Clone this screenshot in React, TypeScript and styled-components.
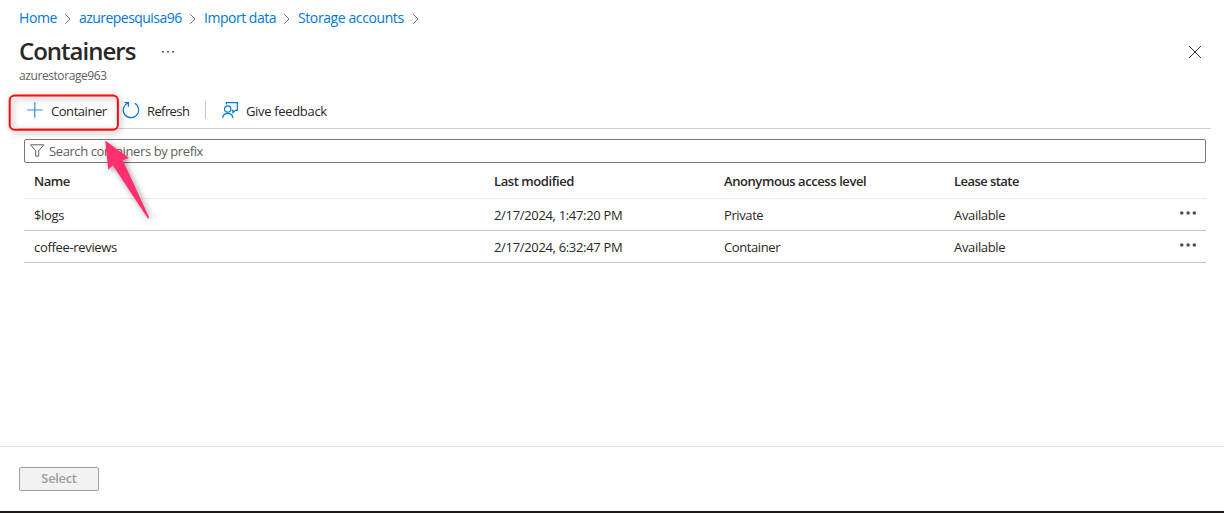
import React from "react";
import styled, { createGlobalStyle } from "styled-components";

const GlobalStyle = createGlobalStyle`
  * { box-sizing: border-box; }
  body {
    margin: 0;
    background: #fff;
    color: #292827;
    font-family: "Open Sans", "Noto Sans", sans-serif;
    font-size: 13px;
    overflow: hidden;
  }
`;

const Page = styled.div`
  position: relative;
  display: flex;
  flex-direction: column;
  height: 513px;
  border-bottom: 2px solid #1b1a19;
`;

const Label = styled.span<{ $track?: number }>`
  letter-spacing: ${(p) => p.$track ?? -0.33}px;
  white-space: nowrap;
`;

const Breadcrumb = styled.nav`
  display: flex;
  align-items: center;
  height: 36px;
  padding-left: 19px;
`;

const Crumb = styled.div<{ $width: number }>`
  display: flex;
  align-items: center;
  justify-content: space-between;
  width: ${(p) => p.$width}px;
  margin-right: 8px;
  color: #0078d4;
  font-size: 14px;

  ${Label} {
    padding-bottom: 1px;
  }
`;

const ChevronIcon = styled.svg`
  margin-top: 2px;
`;

const Header = styled.header`
  display: flex;
  justify-content: space-between;
  height: 56px;
  padding: 0 22px 0 19px;
`;

const TitleRow = styled.div`
  display: flex;
  align-items: center;
  height: 32px;
  gap: 26px;
`;

const Title = styled.h1`
  width: 117px;
  margin: 0;
  padding-bottom: 2px;
  font-size: 24px;
  font-weight: 600;
  line-height: 32px;
  letter-spacing: -1px;
  white-space: nowrap;
`;

const Subtitle = styled.div`
  color: #605e5c;
  font-size: 12px;
  line-height: 16px;
`;

const CloseIcon = styled.svg`
  margin-top: 9px;
`;

const Toolbar = styled.div`
  display: flex;
  align-items: center;
  height: 37px;
  margin: 0 13px 0 19px;
  border-bottom: 1px solid #d2d0ce;
`;

const Command = styled.div<{ $width: number; $gap: number }>`
  display: flex;
  align-items: center;
  width: ${(p) => p.$width}px;
  gap: ${(p) => p.$gap}px;

  ${Label} {
    padding-top: 2px;
  }
`;

const Divider = styled.div`
  width: 1px;
  height: 18px;
  margin-right: 16px;
  background: #c8c6c4;
`;

const Content = styled.main`
  flex: 1;
  padding: 10px 18px 0 24px;
`;

const Search = styled.div`
  display: flex;
  align-items: center;
  height: 24px;
  gap: 4px;
  padding-left: 5px;
  border: 1px solid #7a7876;
  border-radius: 2px;
  color: #605e5c;
`;

const Row = styled.div<{ $head?: boolean }>`
  display: grid;
  grid-template-columns: 460px 230px 230px 1fr 28px;
  align-items: center;
  height: ${(p) => (p.$head ? 36 : 32)}px;
  padding-left: 10px;
  padding-top: ${(p) => (p.$head ? 1 : 0)}px;
  border-bottom: 1px solid ${(p) => (p.$head ? "#edebe9" : "#c8c6c4")};
  font-weight: ${(p) => (p.$head ? 600 : 400)};
`;

const RowMenu = styled.svg`
  margin-top: -3px;
`;

const Footer = styled.footer`
  height: 65px;
  padding: 20px 19px;
  border-top: 1px solid #e1dfdd;
`;

const SelectButton = styled.button`
  display: flex;
  align-items: center;
  justify-content: center;
  width: 80px;
  height: 24px;
  padding: 0 0 2px;
  border: 1px solid #a19f9d;
  border-radius: 2px;
  background: #f3f2f1;
  color: #a19f9d;
  font: 600 13px "Open Sans", sans-serif;
`;

const Annotation = styled.svg`
  position: absolute;
  left: 0;
  top: 85px;
  pointer-events: none;
`;

const Chevron = () => (
  <ChevronIcon width="8" height="12" viewBox="0 0 8 12" fill="none" stroke="#767472">
    <path d="M2.2 1.2 7 6 2.2 10.8" />
  </ChevronIcon>
);

const Dots = () => (
  <RowMenu width="18" height="6" viewBox="0 0 18 6" fill="#54524f">
    <circle cx="3.8" cy="3" r="1.8" />
    <circle cx="10.1" cy="3" r="1.8" />
    <circle cx="16.3" cy="3" r="1.8" />
  </RowMenu>
);

const crumbs = [
  { text: "Home", width: 52, track: -0.4 },
  { text: "azurepesquisa96", width: 117, track: -0.54 },
  { text: "Import data", width: 86, track: -0.48 },
  { text: "Storage accounts", width: 121, track: -0.4 },
];

const rows = [
  { name: "$logs", modified: "2/17/2024, 1:47:20 PM", access: "Private", lease: "Available" },
  { name: "coffee-reviews", modified: "2/17/2024, 6:32:47 PM", access: "Container", lease: "Available" },
];

export default function App() {
  return (
    <Page>
      <GlobalStyle />
      <Breadcrumb>
        {crumbs.map((c) => (
          <Crumb key={c.text} $width={c.width}>
            <Label $track={c.track}>{c.text}</Label>
            <Chevron />
          </Crumb>
        ))}
      </Breadcrumb>
      <Header>
        <div>
          <TitleRow>
            <Title>Containers</Title>
            <svg width="12" height="2" fill="#605e5c">
              <path d="M0 0h2v1.5H0zM5 0h2v1.5H5zM10 0h2v1.5h-2z" />
            </svg>
          </TitleRow>
          <Subtitle>
            <Label $track={-0.42}>azurestorage963</Label>
          </Subtitle>
        </div>
        <CloseIcon width="14" height="14" viewBox="0 0 14 14" stroke="#323130">
          <path d="M1 1l12 12M13 1 1 13" />
        </CloseIcon>
      </Header>
      <Toolbar>
        <Command $width={103} $gap={8}>
          <svg width="24" height="18" viewBox="0 0 24 18" stroke="#2b8edb" strokeWidth="1.2">
            <path d="M8 9h15.5M15.8 1.3v15.5" />
          </svg>
          <Label $track={-0.45}>Container</Label>
        </Command>
        <Command $width={83} $gap={7}>
          <svg width="18" height="18" viewBox="0 0 18 18" fill="none" stroke="#0078d4" strokeWidth="1.2">
            <path d="M12.7 2.3A7.7 7.7 0 1 1 6 1.9M2.4 1.5h4v4.2" />
          </svg>
          <Label $track={-0.6}>Refresh</Label>
        </Command>
        <Divider />
        <Command $width={110} $gap={8}>
          <svg width="16" height="18" viewBox="0 0 16 18" fill="none" stroke="#0078d4" strokeWidth="1.2">
            <path d="M4.3 3.5V1.6h11v7.8h-1.8l-2.5 2.2V9.4H9.8" />
            <circle cx="5.7" cy="8" r="3.2" />
            <path d="M.6 16.8a5.2 5.2 0 0 1 10.3 0" />
          </svg>
          <Label>Give feedback</Label>
        </Command>
      </Toolbar>
      <Content>
        <Search>
          <svg width="15" height="14" viewBox="0 0 15 14" fill="none" stroke="#605e5c">
            <path d="M.6 .8h13.2L8.7 6.8v5.4H5.7V6.8z" />
          </svg>
          <Label $track={-0.4}>Search containers by prefix</Label>
        </Search>
        <Row $head>
          <Label $track={-0.5}>Name</Label>
          <Label $track={-0.42}>Last modified</Label>
          <Label $track={-0.42}>Anonymous access level</Label>
          <Label $track={-0.55}>Lease state</Label>
        </Row>
        {rows.map((r) => (
          <Row key={r.name}>
            <Label>{r.name}</Label>
            <Label>{r.modified}</Label>
            <Label $track={-0.4}>{r.access}</Label>
            <Label>{r.lease}</Label>
            <Dots />
          </Row>
        ))}
      </Content>
      <Footer>
        <SelectButton>
          <Label>Select</Label>
        </SelectButton>
      </Footer>
      <Annotation width="180" height="150" viewBox="0 85 180 150">
        <defs>
          <filter id="shadow" x="-20%" y="-20%" width="150%" height="150%">
            <feDropShadow dx="2" dy="2" stdDeviation="3" floodColor="#000" floodOpacity="0.4" />
          </filter>
        </defs>
        <g filter="url(#shadow)">
          <rect x="9.7" y="95.5" width="108.2" height="34.2" rx="5" fill="none" stroke="#fa0a0a" strokeWidth="2" />
        </g>
        <path d="M105.2 140.5 129 158 122.8 160.2 149.2 217.5 148 218.8 112.8 165.3 108.3 169.8z" fill="#ff2e6c" filter="url(#shadow)" />
      </Annotation>
    </Page>
  );
}
